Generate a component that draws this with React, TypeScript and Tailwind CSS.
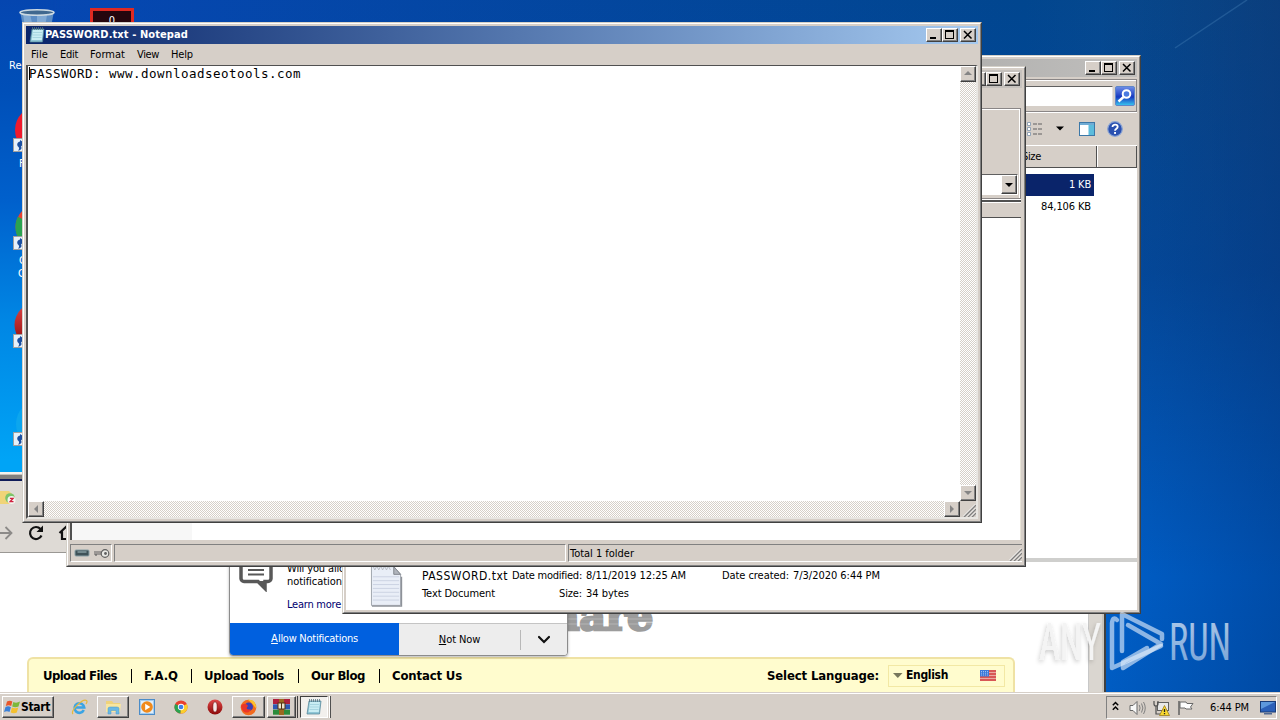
import { useLayoutEffect, useRef, useState } from "react";
import type { ReactNode } from "react";

/* Spreads a line of text over a given width by adjusting its letter spacing. */
function Fit({ w, t, className = "" }: { w: number; t: string; className?: string }) {
  const ref = useRef<HTMLSpanElement>(null);
  const [sp, setSp] = useState(0);
  useLayoutEffect(() => {
    if (ref.current) {
      setSp((w - ref.current.getBoundingClientRect().width) / t.length);
    }
  }, [w, t]);
  return (
    <span ref={ref} className={`inline-block whitespace-pre ${className}`} style={{ letterSpacing: `${sp}px` }}>
      {t}
    </span>
  );
}

const raised =
  "border border-t-white border-l-white border-r-[#404040] border-b-[#404040] bg-[#d6cfc8] shadow-[inset_-1px_-1px_0_#808080]";

function Frame({ className, children }: { className: string; children: ReactNode }) {
  return (
    <div className={`absolute border border-t-[#d4d0c8] border-l-[#d4d0c8] border-r-[#404040] border-b-[#404040] ${className}`}>
      <div className="flex h-full flex-col border border-t-white border-l-white border-r-[#808080] border-b-[#808080] bg-[#d6cfc8] p-[2px]">
        {children}
      </div>
    </div>
  );
}

function CaptionButtons() {
  return (
    <div className="flex h-[14px] shrink-0">
      <div className={`h-[14px] w-4 ${raised}`}>
        <svg width="14" height="12" shapeRendering="crispEdges"><rect x="3" y="8" width="6" height="2" /></svg>
      </div>
      <div className={`mr-[2px] h-[14px] w-4 ${raised}`}>
        <svg width="14" height="12" shapeRendering="crispEdges">
          <path d="M2 1h9v9h-9zM3 3v6h7v-6z" fillRule="evenodd" />
        </svg>
      </div>
      <div className={`h-[14px] w-4 ${raised}`}>
        <svg width="14" height="12"><path d="M3 2l7.500 7.500M10.500 2l-7.500 7.500" stroke="#000" strokeWidth="1.500" /></svg>
      </div>
    </div>
  );
}

function Arrow({ dir }: { dir: "up" | "down" | "left" | "right" }) {
  const d = { up: "M4 9h8l-4-4z", down: "M4 6h8l-4 4z", left: "M10 4v8l-4-4z", right: "M6 4v8l4-4z" }[dir];
  return (
    <div className={`h-4 w-4 shrink-0 ${raised}`}>
      <svg width="14" height="14" viewBox="1 1 14 14"><path d={d} fill="#858585" /></svg>
    </div>
  );
}

function Grip() {
  return (
    <svg width="13" height="13" viewBox="0 0 13 13" className="block">
      <path d="M1 13L13 1M5 13L13 5M9 13L13 9" stroke="#808080" strokeWidth="1.500" />
      <path d="M0 12.500L12.500 0M4 12.500L12.500 4M8 12.500L12.500 8" stroke="#fff" strokeWidth=".8" />
    </svg>
  );
}

function NotepadIcon({ className }: { className: string }) {
  return (
    <svg viewBox="0 0 16 16" className={className}>
      <path d="M3 2h12l-1.500 13H1z" fill="#8fc6d6" stroke="#4d7f93" strokeWidth=".7" />
      <path d="M4 3h10l-1.200 10H2.700z" fill="#c9edf3" />
      <path d="M4 5.500h9M3.800 8h9M3.500 10.500h9" stroke="#9acbd8" strokeWidth=".7" />
      <path d="M3.500 0v3M5.500 0v3M7.500 0v3M9.500 0v3M11.500 0v3M13.500 0v3" stroke="#567480" strokeWidth=".8" />
    </svg>
  );
}

function Shortcut() {
  return (
    <svg width="14" height="14" viewBox="0 0 14 14" className="block">
      <rect x=".5" y=".5" width="13" height="13" fill="#e6f0fa" stroke="#a0a0a0" />
      <path d="M5 12.500c2-2 1-3-.5-4.500C3.500 5.500 5 4 7 3.500V2l4.500 3L8 8.500c1.500 2-.5 4-3 4z" fill="#1b4fa0" />
    </svg>
  );
}

function Chrome({ className }: { className: string }) {
  return (
    <svg viewBox="0 0 16 16" className={className}>
      <circle cx="8" cy="8" r="7.500" fill="#e8402f" />
      <path d="M8 8L1.300 4.600A7.500 7.500 0 0 0 7.500 15.500z" fill="#2aa350" />
      <path d="M8 8L14.700 4.600A7.500 7.500 0 0 1 7.500 15.500z" fill="#fbcf2c" />
      <circle cx="8" cy="8" r="3.600" fill="#fff" />
      <circle cx="8" cy="8" r="2.700" fill="#3f7fe8" />
    </svg>
  );
}

function Opera({ className }: { className: string }) {
  return (
    <svg viewBox="0 0 16 16" className={className}>
      <defs>
        <linearGradient id="op" x1="0" y1="0" x2="0" y2="1"><stop offset="0" stopColor="#e04848" /><stop offset="1" stopColor="#8c0808" /></linearGradient>
      </defs>
      <circle cx="8" cy="8" r="7.500" fill="url(#op)" />
      <ellipse cx="8" cy="8" rx="2.200" ry="5.200" fill="#f6e8e6" stroke="#6b0505" strokeWidth=".6" />
    </svg>
  );
}

function Desktop() {
  return (
    <div className="absolute inset-0 flex bg-[linear-gradient(to_right,transparent_86%,rgba(0,30,90,0.3)),linear-gradient(to_bottom,transparent_0,rgba(0,76,172,0.5)_38%,#0060ca_80%,#005cc2),linear-gradient(to_right,#0647b4,#01468f_80%,#0f4c8c)]">
      <div className="h-full w-[60px] bg-[linear-gradient(to_bottom,#0546b0_0,#004fb8_90px,#0060cc_200px,#0086e4_320px,#00a4f6_460px)] [mask-image:linear-gradient(to_right,#000_50%,transparent)]" />
      <svg viewBox="0 0 140 55" className="absolute top-0 right-0 h-[55px] w-[140px]"><path d="M35 48L107 0" stroke="#4b86bb" strokeWidth="1.500" opacity=".35" /></svg>
      <svg width="40" height="22" viewBox="0 0 40 22" className="absolute top-[5px] left-[17px]">
        <path d="M3 6l3 16h28l3-16z" fill="#5b8cc4" />
        <path d="M6 9l2 13h8l-3-13zM20 10v12h8l2-12z" fill="#a5c6e4" opacity=".5" />
        <ellipse cx="20" cy="7.500" rx="17" ry="2.800" fill="#40688f" stroke="#ccd9e2" strokeWidth="1.600" />
      </svg>
      <div className="absolute top-2 left-[90px] flex h-10 w-11 justify-center border-[3px] border-[#df2a22] bg-[#25060e] text-[11px] leading-[20px] text-white">0</div>
      <div className="absolute top-[59px] left-[9px] text-[11px] leading-[13px] text-white">Recycle Bin</div>
      <div className="absolute top-[106px] left-[15px] h-12 w-12 rounded-full bg-[#f01a2c]" />
      <div className="absolute top-[138px] left-[13px]"><Shortcut /></div>
      <div className="absolute top-[157px] left-[19px] text-[11px] leading-[13px] text-white">Firefox</div>
      <Chrome className="absolute top-[203px] left-[14px] h-12 w-12" />
      <div className="absolute top-[236px] left-[13px]"><Shortcut /></div>
      <div className="absolute top-[254px] left-[18px] text-[11px] leading-[13px] text-white"><span className="pl-px">Google</span><br />Chrome</div>
      <Opera className="absolute top-[301px] left-[13px] h-12 w-12" />
      <div className="absolute top-[334px] left-[13px]"><Shortcut /></div>
      <div className="absolute top-[400px] left-4 h-12 w-12 rounded-full bg-[#0ca6ee]" />
      <div className="absolute top-[432px] left-[13px]"><Shortcut /></div>
    </div>
  );
}

function NotificationPopup() {
  return (
    <div className="absolute top-[60px] left-[229px] flex h-[124px] w-[339px] flex-col overflow-hidden rounded-b-[4px] border border-[#8c8c8c] bg-white shadow-[0_1px_3px_rgba(0,0,0,0.3)]">
      <div className="flex h-[90px] shrink-0 pl-[9px]">
        <svg width="34" height="34" viewBox="0 0 34 34" className="mt-[25px]">
          <path d="M5 1.500h24a3 3 0 0 1 3 3v16a3 3 0 0 1-3 3h-3v7l-7-7H5a3 3 0 0 1-3-3v-16a3 3 0 0 1 3-3z" fill="#fff" stroke="#585858" strokeWidth="3.500" />
          <path d="M9 12h16M9 16.500h16" stroke="#585858" strokeWidth="2" />
          <path d="M19 23l7 7v-7z" fill="#585858" />
        </svg>
        <div className="mt-[29px] ml-[14px] flex flex-col items-start text-[11px] leading-[13px]">
          <Fit w={66} t="Will you allow" />
          <Fit w={60} t="notifications" />
          <Fit w={54} t="Learn more" className="mt-[10px] text-[#000070]" />
        </div>
      </div>
      <div className="flex flex-1 text-[11px]">
        <div className="flex w-[169px] items-center justify-center bg-[#0060df] pt-px text-white">
          <span className="underline underline-offset-1">A</span><Fit w={80} t="llow Notifications" />
        </div>
        <div className="flex flex-1 items-center border-t border-[#c4c4c4] bg-[#ededed]">
          <div className="flex flex-1 justify-center pt-px"><span className="underline underline-offset-1">N</span><Fit w={34} t="ot Now" /></div>
          <div className="h-5 w-px bg-[#b8b8b8]" />
          <div className="flex w-[46px] justify-center pt-px">
            <svg width="14" height="10" viewBox="0 0 14 10"><path d="M2 2l5 5 5-5" fill="none" stroke="#111" strokeWidth="2.200" strokeLinecap="round" /></svg>
          </div>
        </div>
      </div>
    </div>
  );
}

function Flag() {
  return (
    <svg width="16" height="11" viewBox="0 0 16 11">
      <rect width="16" height="11" fill="#e9a9a0" />
      <path d="M0 1h16M0 4h16M0 7h16M0 10h16" stroke="#d23c3c" strokeWidth="1.300" />
      <rect width="9" height="6.500" fill="#3c78d8" />
      <path d="M1 1.500h7M1 3.200h7M1 5h7" stroke="#b8d4f8" strokeWidth=".8" strokeDasharray="1 1" />
    </svg>
  );
}

function Browser() {
  const links: [string, number, string][] = [
    ["Upload Files", 74, "ml-[14px]"],
    ["F.A.Q", 34, "ml-[12px]"],
    ["Upload Tools", 80, "ml-[12px]"],
    ["Our Blog", 54, "ml-[12px]"],
    ["Contact Us", 70, "ml-[12px]"],
  ];
  const dividers = ["ml-[14px]", "ml-[13px]", "ml-[14px]", "ml-[14px]"];
  return (
    <div className="absolute top-[472px] left-0 flex h-[220px] w-[1106px] flex-col border-r-2 border-[#404040] bg-[#dedad5]">
      <div className="h-[2px] shrink-0 bg-[#f4f2ee]" />
      <div className="h-[1px] shrink-0 bg-[#c8c4be]" />
      <div className="h-[4px] shrink-0 bg-[#82807e]" />
      <div className="h-[2px] shrink-0 bg-[#101c58]" />
      <div className="flex h-[34px] shrink-0 items-center">
        <svg width="18" height="18" viewBox="0 0 18 18">
          <path d="M0 2h9l3 3v10H0z" fill="#f0d478" />
          <circle cx="10" cy="9" r="4.800" fill="#7cc46a" />
          <circle cx="11.500" cy="11" r="4" fill="#f4f4f0" />
          <path d="M9.900 9.300h3.200l-3 3.400h3.400" stroke="#d02040" fill="none" strokeWidth="1.300" />
        </svg>
      </div>
      <div className="flex h-[38px] shrink-0 items-center border-b border-[#9a9894] pb-[2px]">
        <svg width="13" height="16" viewBox="0 0 13 16"><path d="M0 8h11M5.500 2l6 6-6 6" fill="none" stroke="#8c8a88" strokeWidth="1.800" /></svg>
        <svg width="18" height="18" viewBox="0 0 18 18" className="ml-[14px]">
          <path d="M14.500 11.500A6 6 0 1 1 13.500 5" fill="none" stroke="#111" strokeWidth="2.200" />
          <path d="M16 1.500v6.500h-6.500z" fill="#111" />
        </svg>
        <svg width="18" height="18" viewBox="0 0 18 18" className="ml-[13px]">
          <path d="M1.500 9L9 2l7.500 7M4 7.500V15h10V7.500" fill="none" stroke="#111" strokeWidth="2.200" />
        </svg>
      </div>
      <div className="flex min-h-0 flex-1">
        <div className="flex flex-1 flex-col bg-white pl-[27px]">
          <div className="flex h-[104px] shrink-0 items-end pb-[21px] pl-[509px]">
            <svg width="130" height="50" viewBox="0 0 130 50">
              <text x="14" y="44" textLength="103" lengthAdjust="spacingAndGlyphs" className="fill-[#9c9c9c] stroke-[#9c9c9c] [font-family:'DejaVu_Serif','Liberation_Serif',serif] text-[40px] font-bold" strokeWidth="2.500">hare</text>
              <path d="M13 33h110M13 38h110" stroke="#fff" strokeWidth=".7" opacity=".35" />
            </svg>
          </div>
          <div className="flex min-h-0 w-[988px] flex-1 items-center rounded-t-[6px] border-2 border-b-0 border-[#efe2a4] bg-[#fffcce] text-[13px] font-bold">
            {links.map(([t, w, gap], i) => (
              <div key={t} className="flex items-center">
                <Fit w={w} t={t} className={gap} />
                {i < links.length - 1 && <span className={`h-[14px] w-px bg-black ${dividers[i]}`} />}
              </div>
            ))}
            <Fit w={112} t="Select Language:" className="ml-auto" />
            <div className="mr-2 ml-[9px] flex h-[22px] w-[117px] items-center border border-[#f2e8a4]">
              <svg width="10" height="6" viewBox="0 0 10 6" className="ml-[4px]"><path d="M0 0h9.500L4.800 5z" fill="#77775c" /></svg>
              <Fit w={42} t="English" className="ml-[3px] pb-px text-[12px]" />
              <span className="mr-[8px] ml-auto"><Flag /></span>
            </div>
          </div>
        </div>
        <div className="w-[14px] border-l border-[#c8c8c8] bg-[#dad6d0]" />
        <div className="w-[2px] bg-[#c8c4bc]" />
      </div>
      <NotificationPopup />
    </div>
  );
}

function Explorer() {
  return (
    <Frame className="top-[55px] left-[342px] h-[559px] w-[799px] text-[11px]">
      <div className="flex h-[18px] shrink-0 items-center justify-end bg-gradient-to-r from-[#808080] to-[#c0bfbd] pr-[2px]"><CaptionButtons /></div>
      <div className="mt-[2px] flex h-[33px] shrink-0 items-center justify-end border border-[#8a8686] pr-[1px] shadow-[0_1px_0_#fff,inset_1px_1px_0_#fff]">
        <div className="h-5 w-[200px] border-t border-r border-t-[#606060] border-r-[#e8e4e0] bg-white" />
        <svg width="20" height="20" viewBox="0 0 20 20" className="ml-[2px]">
          <defs><linearGradient id="sb" x1="0" y1="0" x2="0" y2="1"><stop offset="0" stopColor="#6f8fe8" /><stop offset=".55" stopColor="#1638c0" /><stop offset="1" stopColor="#39c8f0" /></linearGradient></defs>
          <rect x=".5" y=".5" width="19" height="19" rx="1.500" fill="url(#sb)" stroke="#5f86c8" />
          <circle cx="11.500" cy="8" r="3.800" fill="#4a7ae0" stroke="#fff" strokeWidth="2" />
          <path d="M8.500 11L3.500 15.500" stroke="#fff" strokeWidth="2.400" />
        </svg>
      </div>
      <div className="flex h-[33px] shrink-0 items-center justify-end pr-[14px]">
        <svg width="16" height="14" viewBox="0 0 16 14">
          <path d="M.5.500h3v3h-3zM.5 5.500h3v3h-3zM.5 10.500h3v3h-3z" fill="#fff" stroke="#7b93ab" strokeWidth=".8" />
          <path d="M6 2h10M6 7h10M6 12h10" stroke="#606060" strokeWidth="1.200" strokeDasharray="4 1" />
        </svg>
        <svg width="8" height="5" viewBox="0 0 8 5" className="ml-[13px]"><path d="M0 .5h8l-4 4z" /></svg>
        <svg width="16" height="14" viewBox="0 0 16 14" className="ml-[15px]">
          <rect x=".5" y=".5" width="15" height="13" fill="#fff" stroke="#3c78a8" />
          <path d="M1 2h14" stroke="#70acd4" strokeWidth="2" />
          <rect x="9.500" y="3" width="5.500" height="10" fill="#5cbcdc" />
        </svg>
        <svg width="16" height="16" viewBox="0 0 16 16" className="ml-[12px]">
          <circle cx="8" cy="8" r="7.300" fill="#2a50b0" stroke="#8aa4d4" strokeWidth="1.200" />
          <path d="M5.500 6c0-3.300 5.200-3 5.200-.2C10.700 7.800 8 7.700 8 9.800" fill="none" stroke="#fff" strokeWidth="1.800" />
          <rect x="7.100" y="11" width="1.900" height="1.900" fill="#fff" />
        </svg>
      </div>
      <div className="flex h-[23px] shrink-0 justify-end border-t border-b border-t-white border-b-[#505050] leading-[21px]">
        <div className="flex w-[75px] border-r border-[#505050]"><Fit w={19} t="Size" className="pt-px leading-[20px]" /></div>
        <div className="w-10 border-r border-l border-r-[#505050] border-l-white" />
      </div>
      <div className="flex flex-1 flex-col items-end bg-white pt-[6px] pr-[43px]">
        <div className="flex h-[22px] w-[700px] items-center justify-end bg-[#0a246a] pt-px pr-[3px] text-white"><Fit w={22} t="1 KB" /></div>
        <div className="flex h-[22px] items-center pt-px pr-[3px]"><Fit w={50} t="84,106 KB" /></div>
      </div>
      <div className="h-[4px] shrink-0 bg-[#cfcfcd]" />
      <div className="flex h-[48px] shrink-0 bg-white pl-[24px]">
        <svg width="33" height="42" viewBox="0 0 34 43" className="mt-[3px]">
          <path d="M1.500 1.500h23l7 8V41.500H1.500z" fill="#e9eef7" stroke="#9fa4ac" />
          <path d="M24.500 1.500l7 8h-7z" fill="#b0b4bc" stroke="#80848c" />
          <path d="M3 12h27M3 16h27M3 20h27M3 24h27M3 28h27M3 32h27M3 36h27" stroke="#cbd3e2" />
          <path d="M2 42.300h30.500V12" fill="none" stroke="#8e9299" strokeWidth="1.300" />
          <path d="M3 1l2 4 2-4 2 4 2-4 2 4 2-4 2 4 2-4 2 4" fill="none" stroke="#b0b4bc" strokeWidth=".8" />
        </svg>
        <div className="ml-[19px] flex flex-col pt-[7px]">
          <div className="flex h-[14px] items-center">
            <Fit w={86} t="PASSWORD.txt" className="text-[12px]" />
            <Fit w={70} t="Date modified:" className="ml-[4px]" />
            <Fit w={100} t="8/11/2019 12:25 AM" className="ml-[4px]" />
            <Fit w={67} t="Date created:" className="ml-[36px]" />
            <Fit w={87} t="7/3/2020 6:44 PM" className="ml-[4px]" />
          </div>
          <div className="mt-[4px] flex h-[14px] items-center">
            <Fit w={73} t="Text Document" />
            <Fit w={23} t="Size:" className="ml-[64px]" />
            <Fit w={43} t="34 bytes" className="ml-[4px]" />
          </div>
        </div>
      </div>
    </Frame>
  );
}

function Archiver() {
  return (
    <Frame className="top-[66px] left-[66px] h-[501px] w-[960px] text-[11px]">
      <div className="flex h-[18px] shrink-0 items-center justify-end bg-gradient-to-r from-[#808080] to-[#c6c2be] pr-[2px]"><CaptionButtons /></div>
      <div className="mt-[20px] mr-px flex h-[91px] shrink-0 flex-col justify-end border-t border-r border-b border-[#8a8686] px-[2px] pb-[3px] shadow-[inset_-1px_1px_0_#fff,0_1px_0_#fff]">
        <div className="flex h-[21px] justify-end border border-t-[#606060] border-r-white border-b-white border-l-[#606060] bg-white">
          <div className={`flex h-[19px] w-4 items-center ${raised}`}><svg width="14" height="14" viewBox="1 0 14 14"><path d="M4 5h8l-4 4z" /></svg></div>
        </div>
      </div>
      <div className="mt-[1px] mr-px flex min-h-0 flex-1 flex-col border-t-2 border-l-2 border-[#505050] bg-white">
        <div className="h-[16px] shrink-0 border-b border-[#505050] bg-[#d6cfc8] shadow-[inset_0_1px_0_#fff]" />
        <div className="flex flex-1 border-r border-[#e8e4d8]"><div className="w-[120px] bg-[#f7f7f7]" /></div>
      </div>
      <div className="mt-[4px] flex h-[18px] shrink-0 gap-[2px]">
        <div className="flex w-[42px] items-center gap-[3px] border border-t-[#808080] border-r-white border-b-white border-l-[#808080] pl-[3px]">
          <svg width="16" height="8" viewBox="0 0 15 8"><rect x=".5" y="1" width="14" height="6" rx="1" fill="#3f5258" stroke="#8aa0a6" /><path d="M3 3h9" stroke="#a8c0c4" /></svg>
          <svg width="17" height="11" viewBox="0 0 17 11"><path d="M1 4h9M1 6h9M3 6v2" stroke="#606060" fill="none" strokeWidth="1.200" /><circle cx="12" cy="5.500" r="3.800" fill="#e8e8e4" stroke="#606060" strokeWidth="1.200" /><circle cx="12.500" cy="5.500" r="1.400" fill="#606060" /></svg>
        </div>
        <div className="w-[452px] border border-t-[#808080] border-r-white border-b-white border-l-[#808080]" />
        <div className="flex flex-1 items-center justify-between border border-t-[#808080] border-r-0 border-b-white border-l-[#808080] pl-[1px]">
          <Fit w={64} t="Total 1 folder" className="pt-[2px]" />
          <span className="self-end"><Grip /></span>
        </div>
      </div>
      <div className="h-[1px] shrink-0" />
    </Frame>
  );
}

const dither =
  "bg-[conic-gradient(#d6d0c8_25%,#fff_0_50%,#d6d0c8_0_75%,#fff_0)] bg-[length:2px_2px]";

function Notepad() {
  return (
    <Frame className="top-[22px] left-[22px] h-[501px] w-[960px]">
      <div className="flex h-[18px] shrink-0 items-center bg-gradient-to-r from-[#0a246a] to-[#a6caf0] pr-[2px] pl-[3px]">
        <NotepadIcon className="h-4 w-4" />
        <Fit w={143} t="PASSWORD.txt - Notepad" className="pt-px text-[11px] font-bold text-white" />
        <div className="ml-auto"><CaptionButtons /></div>
      </div>
      <div className="flex h-[21px] shrink-0 items-center gap-[12px] pt-px pl-[5px] text-[11px]">
        <Fit w={17} t="File" />
        <Fit w={18} t="Edit" />
        <Fit w={35} t="Format" />
        <Fit w={22} t="View" />
        <Fit w={22} t="Help" />
      </div>
      <div className="flex min-h-0 flex-1 flex-col border-t border-r-2 border-b-2 border-l-2 border-t-[#505050] border-r-[#e8e6e2] border-b-[#e8e6e2] border-l-[#505050] bg-white">
        <div className="flex min-h-0 flex-1">
          <div className="flex flex-1 items-start">
            <span className="mt-px ml-[1px] h-[13px] w-px bg-black" />
            <Fit w={272} t="PASSWORD: www.downloadseotools.com" className="-ml-px pt-px [font-family:'DejaVu_Sans_Mono','Liberation_Mono',monospace] text-[12.500px] leading-[13px]" />
          </div>
          <div className={`flex w-4 flex-col justify-between ${dither}`}>
            <Arrow dir="up" />
            <Arrow dir="down" />
          </div>
        </div>
        <div className="flex h-4 shrink-0">
          <div className={`flex flex-1 justify-between ${dither}`}>
            <Arrow dir="left" />
            <Arrow dir="right" />
          </div>
          <div className="flex h-4 w-4 items-end justify-end bg-[#d6cfc8]"><Grip /></div>
        </div>
      </div>
    </Frame>
  );
}

function Taskbar() {
  const task = `flex h-[22px] items-center justify-center ${raised}`;
  return (
    <div className="absolute bottom-0 left-0 flex h-[28px] w-full items-start border-t border-[#d6cfc8] bg-[#d6cfc8] pl-[2px] text-[11px] shadow-[inset_0_1px_0_#fff]">
      <div className={`mt-[3px] flex h-[22px] w-[52px] shrink-0 items-center pl-[1px] ${raised}`}>
        <svg width="17" height="16" viewBox="0 0 17 16">
          <path d="M3 2.500Q6 .8 8.300 2.500L7.200 7Q4.800 5.500 1.800 7z" fill="#e8562a" />
          <path d="M9.300 3Q12.500 4.500 16 2.500L14.500 7.500Q11.300 9 8.200 7.500z" fill="#7cb83a" />
          <path d="M1.500 8Q4.300 6.500 6.900 8.200L5.500 13Q3 11.500 0 13z" fill="#3a80d8" />
          <path d="M7.900 8.500Q11 10 14.300 8.500L12.800 13.500Q10 15 6.700 13.500z" fill="#f4c030" />
        </svg>
        <Fit w={29} t="Start" className="text-[12px] font-bold" />
      </div>
      <div className="mt-[3px] ml-[17px] flex h-[22px] items-center">
        <svg width="17" height="17" viewBox="0 0 17 17">
          <path d="M12.800 11A4.800 4.800 0 1 1 13.200 8.500H5" fill="none" stroke="#3ba4e4" strokeWidth="2.600" />
          <path d="M2 15C-1.500 12 12-1 15.500 1.500c1 .8.200 2.500-.5 3.500" fill="none" stroke="#e6b93c" strokeWidth="1.200" />
        </svg>
      </div>
      <div className={`mt-[3px] ml-[9px] w-[32px] ${task}`}>
        <svg width="17" height="16" viewBox="0 0 17 16">
          <path d="M1 2h6l1.500 2H15v8H1z" fill="#efd27a" /><path d="M1 5h15l-1 8H1z" fill="#f8e6a0" />
          <path d="M3 15V9.500Q3 8 5 8h7q2 0 2 1.500V15h-3v-3.500H6V15z" fill="#6ab8e4" stroke="#4a98c8" strokeWidth=".5" />
        </svg>
      </div>
      <div className="mt-[3px] ml-[10px] flex h-[22px] items-center">
        <svg width="16" height="16" viewBox="0 0 16 16">
          <rect x=".5" y=".5" width="15" height="15" fill="#a4cdf0" stroke="#4b8cc8" /><rect x="2" y="2" width="12" height="12" fill="#e0eefa" />
          <circle cx="8" cy="8" r="5.800" fill="#f08a1c" /><path d="M6.200 4.800v6.400L11.300 8z" fill="#fff" />
        </svg>
      </div>
      <div className="mt-[3px] ml-[19px] flex h-[22px] items-center"><Chrome className="h-[14px] w-[14px]" /></div>
      <div className="mt-[3px] ml-[19px] flex h-[22px] items-center"><Opera className="h-[16px] w-[16px]" /></div>
      <div className={`mt-[3px] ml-[9px] w-[33px] ${task}`}>
        <svg width="17" height="17" viewBox="0 0 17 17">
          <circle cx="8.500" cy="8.500" r="7.800" fill="#f26a1e" /><path d="M8 1c6-1 8.500 4 8 8-2-1-3-5-8-8z" fill="#fcc22c" />
          <circle cx="8.700" cy="7.800" r="4.300" fill="#3a3fb4" /><path d="M1 7c2-3 5-3 7 0-2 2-2 4 3 3.500-2 5-9 4-10-3.500z" fill="#ea3528" />
        </svg>
      </div>
      <div className={`mt-[3px] ml-[2px] w-[29px] ${task}`}>
        <svg width="17" height="16" viewBox="0 0 17 16">
          <rect y="0" width="17" height="5" fill="#b0203c" /><rect y="5.300" width="17" height="5" fill="#2c58b4" /><rect y="10.700" width="17" height="5" fill="#2c8c3c" />
          <rect x="6" width="5" height="16" fill="#9c6820" /><rect x="5" y="4" width="7" height="6" fill="#ece4cc" stroke="#503010" /><path d="M8.500 4v6" stroke="#503010" />
        </svg>
      </div>
      <div className="mt-[3px] h-[22px] w-[2px] border-r border-[#404040]" />
      <div className="mt-[3px] ml-[2px] flex h-[22px] w-[28px] items-center justify-center border border-t-[#404040] border-r-white border-b-white border-l-[#404040] bg-[#f2f0ed]">
        <NotepadIcon className="h-[16px] w-[16px]" />
      </div>
      <div className="mt-[3px] ml-[1px] h-[22px] w-[2px] border-l border-l-white bg-[#505050]" />
      <div className="mt-[3px] mr-[3px] ml-auto flex h-[23px] w-[171px] items-center border border-t-[#808080] border-r-white border-b-white border-l-[#808080] pl-[5px]">
        <svg width="7" height="10" viewBox="0 0 7 10" className="mb-[3px]"><path d="M.8 4.200l2.700-2.700 2.700 2.700M.8 8.700L3.500 6l2.700 2.700" fill="none" stroke="#000" strokeWidth="1.500" /></svg>
        <svg width="17" height="16" viewBox="0 0 17 16" className="ml-[10px]">
          <path d="M1 5.500h3l4-4v13l-4-4H1z" fill="#f8f8f8" stroke="#686868" />
          <path d="M10.200 5q1.800 3 0 6M12.500 3.500q2.800 4.500 0 9M14.500 2q3.500 6 0 12" fill="none" stroke="#808080" />
        </svg>
        <svg width="17" height="16" viewBox="0 0 17 16" className="ml-[7px]">
          <rect x="4.500" y="2.500" width="11" height="8" fill="#e8e8e8" stroke="#606060" />
          <path d="M1 1v3q0 2 2 2t2-2V1M3 6v8h4" fill="none" stroke="#505050" strokeWidth="1.200" />
          <path d="M11.500 5.500l5 10h-10z" fill="#f8d830" stroke="#907010" strokeWidth=".7" /><path d="M11.500 9v3M11.500 13v1.200" stroke="#222" strokeWidth="1.300" />
        </svg>
        <svg width="17" height="16" viewBox="0 0 17 16" className="ml-[7px]">
          <path d="M2 1v14" stroke="#606060" strokeWidth="1.500" /><path d="M3 2h6l1 1.500h6l-2.500 3.500L15 9H9L8 8H3z" fill="#fdfdfd" stroke="#686868" />
        </svg>
        <Fit w={39} t="6:44 PM" className="ml-[16px] pt-px" />
        <svg width="16" height="14" viewBox="0 0 16 14" className="ml-[11px]">
          <rect x=".5" y=".5" width="15" height="10.500" fill="#2a60b8" stroke="#183c78" /><path d="M1 1h14L1 8z" fill="#5c98dc" /><rect x="4" y="12" width="8" height="1.500" fill="#506890" />
        </svg>
      </div>
    </div>
  );
}

function Watermark() {
  return (
    <svg viewBox="0 0 200 70" className="absolute top-[606px] left-[1035px] h-[70px] w-[200px]">
      <defs>
        <filter id="soft" x="-20%" y="-20%" width="140%" height="140%"><feDropShadow dx="-1" dy="2" stdDeviation="2" floodColor="#000" floodOpacity=".22" /></filter>
        <linearGradient id="wm" x1="0" y1="0" x2="0" y2="1"><stop offset="0" stopColor="#fff" stopOpacity=".7" /><stop offset="1" stopColor="#e4eefa" stopOpacity=".5" /></linearGradient>
      </defs>
      <g className="[font-family:Roboto,'Liberation_Sans',sans-serif] text-[52px]" fill="url(#wm)">
        <text x="4" y="54" textLength="62" lengthAdjust="spacingAndGlyphs" filter="url(#soft)" fill="#f4f4f4">ANY</text>
        <text x="134" y="54" textLength="62" lengthAdjust="spacingAndGlyphs">RUN</text>
      </g>
      <g fill="none" stroke="#e4effb" strokeOpacity=".62" strokeWidth="4.500" strokeLinejoin="round" strokeLinecap="round">
        <path d="M82 14Q78 10 77 17V62L126 40" />
        <path d="M87 45V8L127 28V33" />
        <path d="M93 19L126 38L88 62V56L112 42" />
      </g>
    </svg>
  );
}

export default function App() {
  return (
    <div className="relative h-[720px] w-[1280px] overflow-hidden text-black [font-family:'DejaVu_Sans_Condensed','DejaVu_Sans',sans-serif] [font-stretch:condensed]">
      <Desktop />
      <Browser />
      <Explorer />
      <Archiver />
      <Notepad />
      <Taskbar />
      <Watermark />
    </div>
  );
}
